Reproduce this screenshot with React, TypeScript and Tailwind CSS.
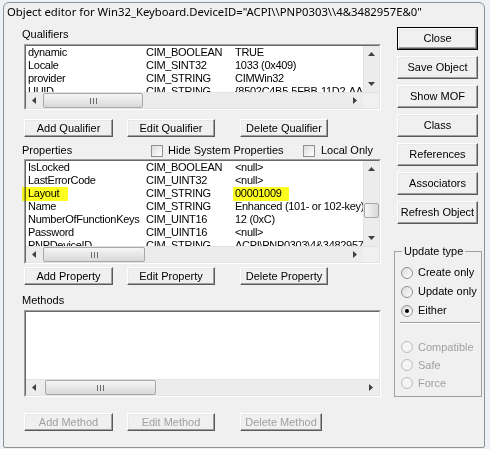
import React from 'react'
import { clsx } from 'clsx'

type Row = [string, string, string]

const qualifiers: Row[] = [
  ['dynamic', 'CIM_BOOLEAN', 'TRUE'],
  ['Locale', 'CIM_SINT32', '1033 (0x409)'],
  ['provider', 'CIM_STRING', 'CIMWin32'],
  ['UUID', 'CIM_STRING', '{8502C4B5-5FBB-11D2-AAC1-006008C78BC7}'],
]

const properties: Row[] = [
  ['IsLocked', 'CIM_BOOLEAN', '<null>'],
  ['LastErrorCode', 'CIM_UINT32', '<null>'],
  ['Layout', 'CIM_STRING', '00001009'],
  ['Name', 'CIM_STRING', 'Enhanced (101- or 102-key)'],
  ['NumberOfFunctionKeys', 'CIM_UINT16', '12 (0xC)'],
  ['Password', 'CIM_UINT16', '<null>'],
  ['PNPDeviceID', 'CIM_STRING', 'ACPI\\PNP0303\\4&3482957E&0'],
]

function Tri({ dir }: { dir: 'up' | 'down' | 'left' | 'right' }) {
  const vert = dir === 'up' || dir === 'down'
  const pts = {
    up: '0,4 3.5,0 7,4',
    down: '0,0 3.5,4 7,0',
    left: '4,0 0,3.5 4,7',
    right: '0,0 4,3.5 0,7',
  }[dir]
  return (
    <svg width={vert ? 7 : 4} height={vert ? 4 : 7} viewBox={vert ? '0 0 7 4' : '0 0 4 7'}>
      <polygon points={pts} fill="#404040" />
    </svg>
  )
}

function Grip() {
  return (
    <div className="flex gap-[2px]">
      <div className="w-px h-[6px] bg-[#6b6b6b]" />
      <div className="w-px h-[6px] bg-[#6b6b6b]" />
      <div className="w-px h-[6px] bg-[#6b6b6b]" />
    </div>
  )
}

function HScroll({ thumb, corner }: { thumb: string; corner: boolean }) {
  return (
    <div className="h-[16px] flex bg-[#ececec] border-t border-t-[#e2e2e2]">
      <div className="w-[16px] flex items-center justify-center">
        <Tri dir="left" />
      </div>
      <div className="flex-1 flex items-center">
        <div className={clsx('h-[15px] rounded-[2px] border border-[#a8a8a8] bg-linear-to-b from-[#f6f6f6] to-[#d9d9d9] flex items-center justify-center', thumb)}>
          <Grip />
        </div>
      </div>
      <div className="w-[16px] flex items-center justify-center">
        <Tri dir="right" />
      </div>
      {corner && <div className="w-[16px] bg-[#f0f0f0]" />}
    </div>
  )
}

function VScroll({ thumb }: { thumb?: string }) {
  return (
    <div className="w-[16px] flex flex-col bg-[#ececec] border-l border-l-[#e2e2e2]">
      <div className="h-[16px] flex items-center justify-center">
        <Tri dir="up" />
      </div>
      <div className="flex-1 flex flex-col items-center">
        {thumb && (
          <div className={clsx('w-[15px] rounded-[2px] border border-[#a8a8a8] bg-linear-to-r from-[#f6f6f6] to-[#d9d9d9]', thumb)} />
        )}
      </div>
      <div className="h-[16px] flex items-center justify-center">
        <Tri dir="down" />
      </div>
    </div>
  )
}

function ListBox({
  rows,
  className,
  vscroll,
  vthumb,
  hthumb,
  children,
}: {
  rows: Row[]
  className: string
  vscroll: boolean
  vthumb?: string
  hthumb: string
  children?: React.ReactNode
}) {
  return (
    <div className={clsx('relative border border-t-[#a0a0a0] border-l-[#a0a0a0] border-r-white border-b-white', className)}>
      <div className="h-full flex flex-col border border-t-[#696969] border-l-[#696969] border-r-[#e3e3e3] border-b-[#e3e3e3] bg-white">
        <div className="flex-1 flex min-h-0">
          <div className="flex-1 overflow-hidden text-[11px] tracking-[-0.3px]">
            {rows.map((r) => (
              <div key={r[0]} className="h-[13px] leading-[13px] flex whitespace-nowrap">
                <span className="w-[120px] pl-[2px] shrink-0">{r[0]}</span>
                <span className="w-[89px] shrink-0">{r[1]}</span>
                <span>{r[2]}</span>
              </div>
            ))}
          </div>
          {vscroll && <VScroll thumb={vthumb} />}
        </div>
        <HScroll thumb={hthumb} corner={vscroll} />
      </div>
      {children}
    </div>
  )
}

function Btn({
  children,
  className,
  disabled = false,
}: {
  children: React.ReactNode
  className?: string
  disabled?: boolean
}) {
  return (
    <div
      className={clsx(
        'flex items-center justify-center border border-t-white border-l-white border-r-[#5a5a5a] border-b-[#5a5a5a] bg-[#f0f0f0] shadow-[inset_-1px_-1px_0_#a0a0a0,inset_1px_1px_0_#e8e8e8] whitespace-nowrap',
        disabled ? 'text-[#a0a0a0]' : 'text-black',
        className
      )}
    >
      {children}
    </div>
  )
}

function SideBtn({ children, isDefault = false }: { children: React.ReactNode; isDefault?: boolean }) {
  if (isDefault) {
    return (
      <div className="ml-[3px] w-[81px] h-[23px] border border-black">
        <Btn className="h-full text-[11px]">{children}</Btn>
      </div>
    )
  }
  return <Btn className="ml-[3px] w-[81px] h-[23px] text-[11px]">{children}</Btn>
}

function Checkbox() {
  return (
    <div className="w-[12px] h-[12px] border border-[#8e8f8f] bg-linear-to-br from-[#dedede] to-white shrink-0" />
  )
}

function Radio({ label, checked = false, disabled = false, className }: { label: string; checked?: boolean; disabled?: boolean; className: string }) {
  return (
    <div className={clsx('flex items-center', className)}>
      <div
        className={clsx(
          'w-[12px] h-[12px] rounded-full border flex items-center justify-center shrink-0',
          disabled ? 'border-[#bcbcbc] bg-[#f4f4f4]' : 'border-[#8e8f8f] bg-linear-to-br from-[#dadada] to-white'
        )}
      >
        {checked && <div className="w-[4px] h-[4px] rounded-full bg-black" />}
      </div>
      <span className={clsx('ml-[5px]', disabled ? 'text-[#a0a0a0]' : 'text-black')}>{label}</span>
    </div>
  )
}

export default function App() {
  return (
    <div className="w-[490px] h-[449px] overflow-hidden bg-[#eef2f6] font-['Liberation_Sans',Arial,sans-serif] text-[10.5px] text-black">
      <div className="ml-[3px] mt-[2px] w-[482px] h-[446px] rounded-t-[6px] rounded-b-[2px] border border-[#8d9298] bg-[#f0f0f0] flex flex-col">
        <div className="h-[18px] pl-[3px] flex items-center whitespace-nowrap font-['Noto_Sans','Open_Sans',sans-serif] text-[11.3px]">
          {'Object editor for Win32_Keyboard.DeviceID="ACPI\\\\PNP0303\\\\4&3482957E&0"'}
        </div>

        <div className="flex pl-[20px] pt-[6px]">
          <div className="w-[357px] flex flex-col">
            <div className="-ml-[2px] h-[14px] leading-[14px] text-[11px]">Qualifiers</div>
            <ListBox rows={qualifiers} className="mt-[3px] h-[66px]" vscroll hthumb="ml-px w-[100px]" />
            <div className="mt-[9px] h-[18px] flex text-[11px]">
              <Btn className="w-[89px]">Add Qualifier</Btn>
              <Btn className="ml-[14px] w-[88px]">Edit Qualifier</Btn>
              <Btn className="ml-[25px] w-[88px]">Delete Qualifier</Btn>
            </div>

            <div className="mt-[7px] h-[13px] flex items-center text-[11px]">
              <span className="-ml-[2px] w-[129px] shrink-0">Properties</span>
              <div className="w-[152px] flex items-center shrink-0">
                <Checkbox />
                <span className="ml-[5px]">Hide System Properties</span>
              </div>
              <Checkbox />
              <span className="ml-[6px]">Local Only</span>
            </div>
            <ListBox
              rows={properties}
              className="mt-[2px] h-[105px]"
              vscroll
              vthumb="mt-[26px] h-[15px]"
              hthumb="ml-px w-[102px]"
            >
              <div className="absolute left-[-3px] top-[27px] w-[46px] h-[14px] bg-[#ffff1f] mix-blend-multiply" />
              <div className="absolute left-[208px] top-[27px] w-[56px] h-[14px] bg-[#ffff1f] mix-blend-multiply" />
            </ListBox>
            <div className="mt-[3px] h-[18px] flex text-[11px]">
              <Btn className="w-[89px]">Add Property</Btn>
              <Btn className="ml-[14px] w-[88px]">Edit Property</Btn>
              <Btn className="ml-[25px] w-[88px]">Delete Property</Btn>
            </div>

            <div className="mt-[9px] -ml-[2px] h-[13px] leading-[13px] text-[11px]">Methods</div>
            <ListBox rows={[]} className="mt-[3px] h-[87px]" vscroll={false} hthumb="ml-[3px] w-[111px]" />
            <div className="mt-[16px] h-[18px] flex text-[11px]">
              <Btn disabled className="w-[89px]">Add Method</Btn>
              <Btn disabled className="ml-[14px] w-[88px]">Edit Method</Btn>
              <Btn disabled className="ml-[25px] w-[82px]">Delete Method</Btn>
            </div>
          </div>

          <div className="ml-[13px] w-[88px] flex flex-col">
            <div className="flex flex-col gap-[6px]">
              <SideBtn isDefault>Close</SideBtn>
              <SideBtn>Save Object</SideBtn>
              <SideBtn>Show MOF</SideBtn>
              <SideBtn>Class</SideBtn>
              <SideBtn>References</SideBtn>
              <SideBtn>Associators</SideBtn>
              <SideBtn>Refresh Object</SideBtn>
            </div>

            <fieldset className="mt-[21px] h-[152px] border border-[#a0a0a0]">
              <legend className="ml-[7px] px-[2px] text-[11px] leading-[13px]">Update type</legend>
              <div className="pl-[6px] pt-[5px] flex flex-col text-[11px]">
                <Radio className="h-[19px]" label="Create only" />
                <Radio className="h-[19px]" label="Update only" />
                <Radio className="h-[19px]" label="Either" checked />
                <div className="mt-[2px] -ml-px w-[80px] h-px bg-[#a0a0a0] shadow-[0_1px_0_#ffffff]" />
                <Radio className="mt-[15px] h-[18px]" label="Compatible" disabled />
                <Radio className="h-[18px]" label="Safe" disabled />
                <Radio className="h-[18px]" label="Force" disabled />
              </div>
            </fieldset>
          </div>
        </div>
      </div>
    </div>
  )
}
